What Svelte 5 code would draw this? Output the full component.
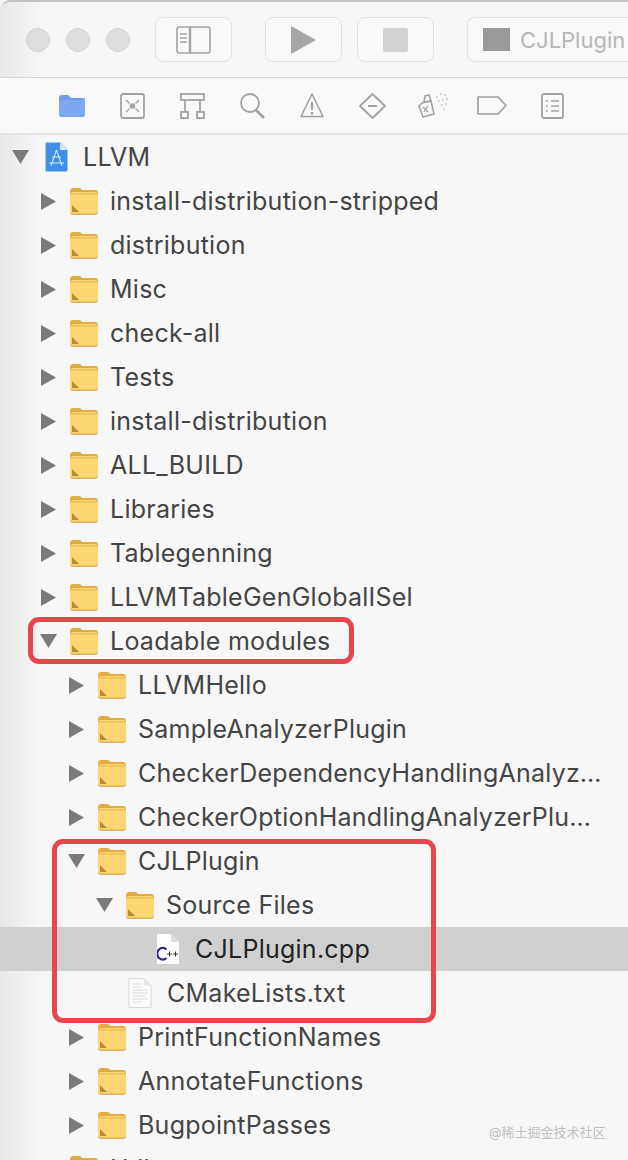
<script>
  const rows = [
    { name: "LLVM", depth: 0, arrow: "open", icon: "project" },
    { name: "install-distribution-stripped", depth: 1, arrow: "closed" },
    { name: "distribution", depth: 1, arrow: "closed" },
    { name: "Misc", depth: 1, arrow: "closed" },
    { name: "check-all", depth: 1, arrow: "closed" },
    { name: "Tests", depth: 1, arrow: "closed" },
    { name: "install-distribution", depth: 1, arrow: "closed" },
    { name: "ALL_BUILD", depth: 1, arrow: "closed" },
    { name: "Libraries", depth: 1, arrow: "closed" },
    { name: "Tablegenning", depth: 1, arrow: "closed" },
    { name: "LLVMTableGenGlobalISel", depth: 1, arrow: "closed" },
    { name: "Loadable modules", depth: 1, arrow: "open" },
    { name: "LLVMHello", depth: 2, arrow: "closed" },
    { name: "SampleAnalyzerPlugin", depth: 2, arrow: "closed" },
    { name: "CheckerDependencyHandlingAnalyzerPlugin", depth: 2, arrow: "closed" },
    { name: "CheckerOptionHandlingAnalyzerPlugin", depth: 2, arrow: "closed" },
    { name: "CJLPlugin", depth: 2, arrow: "open" },
    { name: "Source Files", depth: 3, arrow: "open" },
    { name: "CJLPlugin.cpp", depth: 4, icon: "cpp", selected: true },
    { name: "CMakeLists.txt", depth: 3, icon: "text" },
    { name: "PrintFunctionNames", depth: 2, arrow: "closed" },
    { name: "AnnotateFunctions", depth: 2, arrow: "closed" },
    { name: "BugpointPasses", depth: 2, arrow: "closed" },
    { name: "Utils", depth: 1, arrow: "closed" }
  ];
</script>

{#snippet folder()}
  <svg class="icon" width="28" height="28" viewBox="0 0 28 28">
    <path d="M0 5 Q0 1 3 1 H9 Q11 1 12 3 H25 Q28 3 28 6 V10 H0 Z" fill="#e0ab3f" />
    <path d="M0 7.5 Q0 5 2.5 5 H25.5 Q28 5 28 7.5 V24 Q28 27 25 27 H3 Q0 27 0 24 Z" fill="#fbd672" />
    <path d="M0 6 H28 V7.5 H0 Z" fill="#eebf57" />
    <path d="M2 18 L9 25 H2 Z" fill="#b98d35" />
    <path d="M0 24 Q0 26.4 3 26.4 H25 Q28 26.4 28 24 V25 Q28 28 25 28 H3 Q0 28 0 25 Z" fill="#dfb35a" />
  </svg>
{/snippet}

<div class="window">
  <header class="toolbar">
    <div class="lights"><span></span><span></span><span></span></div>
    <button class="tool sidebar" aria-label="Navigator">
      <svg width="35" height="28" viewBox="0 0 35 28" fill="none" stroke="#a2a2a2" stroke-width="1.6">
        <rect x="1" y="1" width="33" height="26" rx="2.5" />
        <path d="M14 1 V27" stroke-width="2.4" />
        <path d="M4 8 H11 M4 12 H11 M4 16 H11" stroke-width="1.4" />
      </svg>
    </button>
    <button class="tool play" aria-label="Run">
      <svg width="25" height="28" viewBox="0 0 25 28"><path d="M0 0 L25 14 L0 28 Z" fill="#a6a6a6" /></svg>
    </button>
    <button class="tool stop" aria-label="Stop"><span></span></button>
    <div class="scheme"><i></i><span>CJLPlugin</span></div>
  </header>

  <nav class="navbar">
    <svg width="26" height="22" viewBox="0 0 26 22"><path d="M0 3 Q0 0 3 0 H9 L12 3 H24 Q26 3 26 5 V7 H0 Z" fill="#6f9eee" /><rect y="5" width="26" height="17" rx="2.5" fill="#7ca7f1" /></svg>
    <svg width="25" height="26" viewBox="0 0 25 26" fill="none" stroke="#a2a2a2" stroke-width="1.8"><rect x="1" y="1" width="23" height="24" rx="2" /><circle cx="12.5" cy="13" r="2.8" fill="#a2a2a2" stroke="none" /><path d="M6 7 L9.5 10.5 M19 7 L15.5 10.5 M6 19 L9.5 15.5 M19 19 L15.5 15.5" stroke-width="1.4" /></svg>
    <svg width="25" height="26" viewBox="0 0 25 26" fill="none" stroke="#a2a2a2" stroke-width="1.8"><rect x="1" y="1" width="23" height="6" /><rect x="1" y="19" width="7" height="6" /><rect x="17" y="19" width="7" height="6" /><path d="M5 7 V19 M20 7 V19" /></svg>
    <svg width="25" height="26" viewBox="0 0 25 26" fill="none" stroke="#a2a2a2" stroke-width="1.8"><circle cx="10" cy="10" r="9" /><path d="M16 17 L24 25" stroke-width="2.6" /></svg>
    <svg width="24" height="25" viewBox="0 0 24 25" fill="none" stroke="#a2a2a2" stroke-width="1.6"><path d="M12 1 L23 23.5 H1 Z" stroke-linejoin="round" /><path d="M12 9 V17 M12 19 V21.5" stroke-width="2.2" /></svg>
    <svg width="27" height="26" viewBox="0 0 27 26" fill="none" stroke="#a2a2a2" stroke-width="1.8"><path d="M13.5 1 L26 13 L13.5 25 L1 13 Z" stroke-linejoin="round" /><path d="M9 13 H18" stroke-width="2" /></svg>
    <svg width="31" height="27" viewBox="0 0 31 27" fill="none" stroke="#a2a2a2" stroke-width="1.6"><path d="M5 11 L14 9 L17 22 L6 25 L2 14 Z" stroke-linejoin="round" /><path d="M8 4 L12 3 L14 9 L7 10 Z" /><path d="M6 15 L11 20 M11 14 L7 20" stroke-width="1.3" /><path d="M19 5 h1.5 M23 2 h1.5 M27 3 h1.5 M21 9 h1.5 M25 8 h1.5 M29 7 h1.5 M24 13 h1.5 M28 12 h1.5 M26 17 h1.5" stroke="#bdbdbd" /></svg>
    <svg width="30" height="19" viewBox="0 0 30 19" fill="none" stroke="#a2a2a2" stroke-width="1.7"><path d="M1 1 H21 L29 9.5 L21 18 H1 Z" stroke-linejoin="round" /></svg>
    <svg width="23" height="26" viewBox="0 0 23 26" fill="none" stroke="#a2a2a2" stroke-width="1.8"><rect x="1" y="1" width="21" height="24" rx="2" /><path d="M5 8 H7 M10 8 H18 M5 13 H7 M10 13 H18 M5 18 H7 M10 18 H18" stroke-width="1.5" /></svg>
  </nav>

  <div class="tree">
    {#each rows as row}
      <div class="row depth{row.depth}" class:selected={row.selected}>
        <span class="arrow-slot">
          {#if row.arrow === "open"}
            <svg width="17" height="14" viewBox="0 0 17 14"><path d="M0 0 H17 L8.5 14 Z" fill="#7a7a7a" /></svg>
          {:else if row.arrow === "closed"}
            <svg class="closed" width="15" height="17" viewBox="0 0 15 17"><path d="M0 0 L15 8.5 L0 17 Z" fill="#7a7a7a" /></svg>
          {/if}
        </span>
        {#if row.icon === "project"}
          <svg class="icon project" width="23" height="30" viewBox="0 0 23 30">
            <path d="M.5 2 Q.5 .5 2 .5 H15 L22.5 8 V28 Q22.5 29.5 21 29.5 H2 Q.5 29.5 .5 28 Z" fill="#3f8fe8" stroke="#9cc5f2" />
            <path d="M15 .5 V8 H22.5 Z" fill="#d6e8fa" />
            <path d="M4 21 H19 M11.5 8 L6 24 M11.5 8 L17 24 M7 15 H16" stroke="#d5e7fb" stroke-width="1.1" fill="none" />
          </svg>
        {:else if row.icon === "cpp"}
          <svg class="icon cpp" width="22" height="30" viewBox="0 0 22 30">
            <path d="M0 0 H14 L22 8 V30 H0 Z" fill="#fff" />
            <path d="M14 0 V8 H22 Z" fill="#dcdcdc" />
            <path d="M9.5 15.5 A5.5 5.8 0 1 0 9.5 24" fill="none" stroke="#37288f" stroke-width="2.2" />
            <path d="M10 20 H15 M12.5 17.5 V22.5 M16 20 H21 M18.5 17.5 V22.5" stroke="#333" stroke-width="1" />
          </svg>
        {:else if row.icon === "text"}
          <svg class="icon file" width="24" height="30" viewBox="0 0 24 30">
            <path d="M1 .5 H16 L23 7.5 V29.5 H1 Z" fill="#fcfcfc" stroke="#d8d8d8" />
            <path d="M16 .5 V7.5 H23 Z" fill="#e6e6e6" />
            <path d="M4 6 H13 M4 9 H13 M4 12 H20 M4 15 H20 M4 18 H18 M4 21 H20 M4 24 H14" stroke="#dadada" stroke-width="1.1" />
          </svg>
        {:else}
          {@render folder()}
        {/if}
        <span class="label">{row.name}</span>
      </div>
    {/each}
    <div class="mark first"></div>
    <div class="mark second"></div>
    <div class="watermark">@稀土掘金技术社区</div>
  </div>
</div>

<style>
  :global(body) {
    background: #f7f7f7;
    overflow: hidden;
  }

  .window {
    height: 1160px;
    overflow: hidden;
    box-sizing: border-box;
    border-top: 2px solid #c4c4c4;
    border-top-left-radius: 10px;
    background: linear-gradient(90deg, #e9e9e9, #f7f7f7 45px);
    font-family: Inter, "Noto Sans CJK SC", sans-serif;
  }

  .toolbar {
    height: 76px;
    box-sizing: border-box;
    display: flex;
    align-items: center;
    padding: 0 0 0 26px;
    border-bottom: 1px solid #d6d6d6;
  }

  .lights {
    display: flex;
    gap: 16px;
    margin-right: 25px;
  }

  .lights span {
    width: 24px;
    height: 24px;
    border-radius: 50%;
    background: #dedede;
    border: 1px solid #d4d4d4;
    box-sizing: border-box;
  }

  .tool {
    height: 45px;
    width: 77px;
    padding: 0;
    border: 1px solid #e2e2e2;
    border-radius: 8px;
    background: #f9f9f9;
    display: flex;
    align-items: center;
    justify-content: center;
  }

  .sidebar {
    margin-right: 33px;
  }

  .play {
    margin-right: 15px;
  }

  .stop {
    margin-right: 33px;
  }

  .stop span {
    width: 25px;
    height: 24px;
    background: #d2d2d2;
    border-radius: 2px;
  }

  .scheme {
    flex: 1;
    height: 45px;
    box-sizing: border-box;
    display: flex;
    align-items: center;
    gap: 10px;
    padding-left: 15px;
    border: 1px solid #e2e2e2;
    border-right: 0;
    border-radius: 8px 0 0 8px;
    background: #f9f9f9;
    color: #b6b6b6;
    font-size: 22px;
    white-space: nowrap;
  }

  .scheme i {
    width: 27px;
    height: 23px;
    flex-shrink: 0;
    background: #9a9a9a;
  }

  .navbar {
    height: 57px;
    box-sizing: border-box;
    display: grid;
    grid-template-columns: repeat(9, 60px);
    align-items: center;
    justify-items: center;
    padding-left: 42px;
    border-bottom: 2px solid #e3e3e3;
    background: #f9f9f9;
  }

  .tree {
    position: relative;
  }

  .row {
    height: 44px;
    display: flex;
    align-items: center;
    white-space: nowrap;
  }

  .depth0 { padding-left: 12px; }
  .depth1 { padding-left: 40px; }
  .depth2 { padding-left: 68px; }
  .depth3 { padding-left: 96px; }
  .depth4 { padding-left: 124px; }

  .arrow-slot {
    width: 30px;
    display: flex;
    align-items: center;
    flex-shrink: 0;
  }

  .closed {
    margin-left: 1px;
  }

  .icon {
    flex-shrink: 0;
    margin-right: 12px;
  }

  .project {
    margin: 0 15px 0 3px;
  }

  .cpp {
    margin: 0 16px 0 3px;
  }

  .file {
    margin: 0 15px 0 2px;
  }

  .label {
    font-size: 25px;
    letter-spacing: 0.25px;
    color: #444;
    max-width: 466px;
    overflow: hidden;
    text-overflow: ellipsis;
  }

  .selected {
    background: #d0d0d0;
  }

  .selected .label {
    color: #222;
  }

  .mark {
    position: absolute;
    border: 5px solid #e8464c;
    border-radius: 11px;
    box-sizing: border-box;
    pointer-events: none;
  }

  .first {
    left: 28px;
    top: 482px;
    width: 326px;
    height: 47px;
  }

  .second {
    left: 52px;
    top: 704px;
    width: 384px;
    height: 184px;
  }

  .watermark {
    position: absolute;
    left: 489px;
    top: 987px;
    font-size: 13px;
    color: #c0c0c0;
    white-space: nowrap;
  }
</style>
